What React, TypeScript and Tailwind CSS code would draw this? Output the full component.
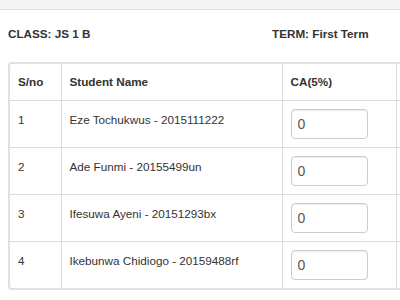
const students = [
  { sn: 1, name: "Eze Tochukwus - 2015111222" },
  { sn: 2, name: "Ade Funmi - 20155499un" },
  { sn: 3, name: "Ifesuwa Ayeni - 20151293bx" },
  { sn: 4, name: "Ikebunwa Chidiogo - 20159488rf" },
];

export default function App() {
  return (
    <div className="w-[400px] h-[300px] overflow-hidden bg-white text-[#333] font-['Liberation_Sans',Arial,sans-serif] text-[11.7px]">
      {/* top strip */}
      <div className="h-[10px] bg-[#f5f5f5] border-b border-[#ddd]" />

      {/* class / term line */}
      <div className="flex pl-[8px] pt-[15px] font-bold leading-[17px]">
        <div className="w-[264px]">CLASS: JS 1 B</div>
        <div>TERM: First Term</div>
      </div>

      {/* scores table */}
      <div className="ml-[8px] mt-[20px] w-[520px] border-2 border-[#e0e0e0] rounded-[4px] overflow-hidden">
        <table className="w-full table-fixed border-collapse">
          <colgroup>
            <col className="w-[51px]" />
            <col className="w-[221px]" />
            <col className="w-[114px]" />
            <col />
          </colgroup>
          <thead>
            <tr className="h-[36px]">
              <th className="border border-t-0 border-l-0 border-[#ddd] px-[8px] text-left font-bold align-middle">S/no</th>
              <th className="border border-t-0 border-[#ddd] px-[8px] text-left font-bold align-middle">Student Name</th>
              <th className="border border-t-0 border-[#ddd] px-[8px] text-left font-bold align-middle">CA(5%)</th>
              <th className="border border-t-0 border-r-0 border-[#ddd]" />
            </tr>
          </thead>
          <tbody>
            {students.map((s, i) => (
              <tr key={s.sn} className="h-[47px]">
                <td className={`border border-l-0 border-[#ddd] px-[8px] pt-[10px] align-top leading-[17px] ${i === students.length - 1 ? "border-b-0" : ""}`}>{s.sn}</td>
                <td className={`border border-[#ddd] px-[8px] pt-[10px] align-top leading-[17px] ${i === students.length - 1 ? "border-b-0" : ""}`}>{s.name}</td>
                <td className={`border border-[#ddd] px-[8px] py-[8px] align-top ${i === students.length - 1 ? "border-b-0" : ""}`}>
                  <input
                    defaultValue="0"
                    className="block w-[77px] h-[30px] px-[6px] border border-[#ccc] rounded-[4px] text-[14px] text-[#555] shadow-[inset_0_1px_1px_rgba(0,0,0,0.075)] outline-none"
                  />
                </td>
                <td className={`border border-r-0 border-[#ddd] ${i === students.length - 1 ? "border-b-0" : ""}`} />
              </tr>
            ))}
          </tbody>
        </table>
      </div>
    </div>
  );
}
